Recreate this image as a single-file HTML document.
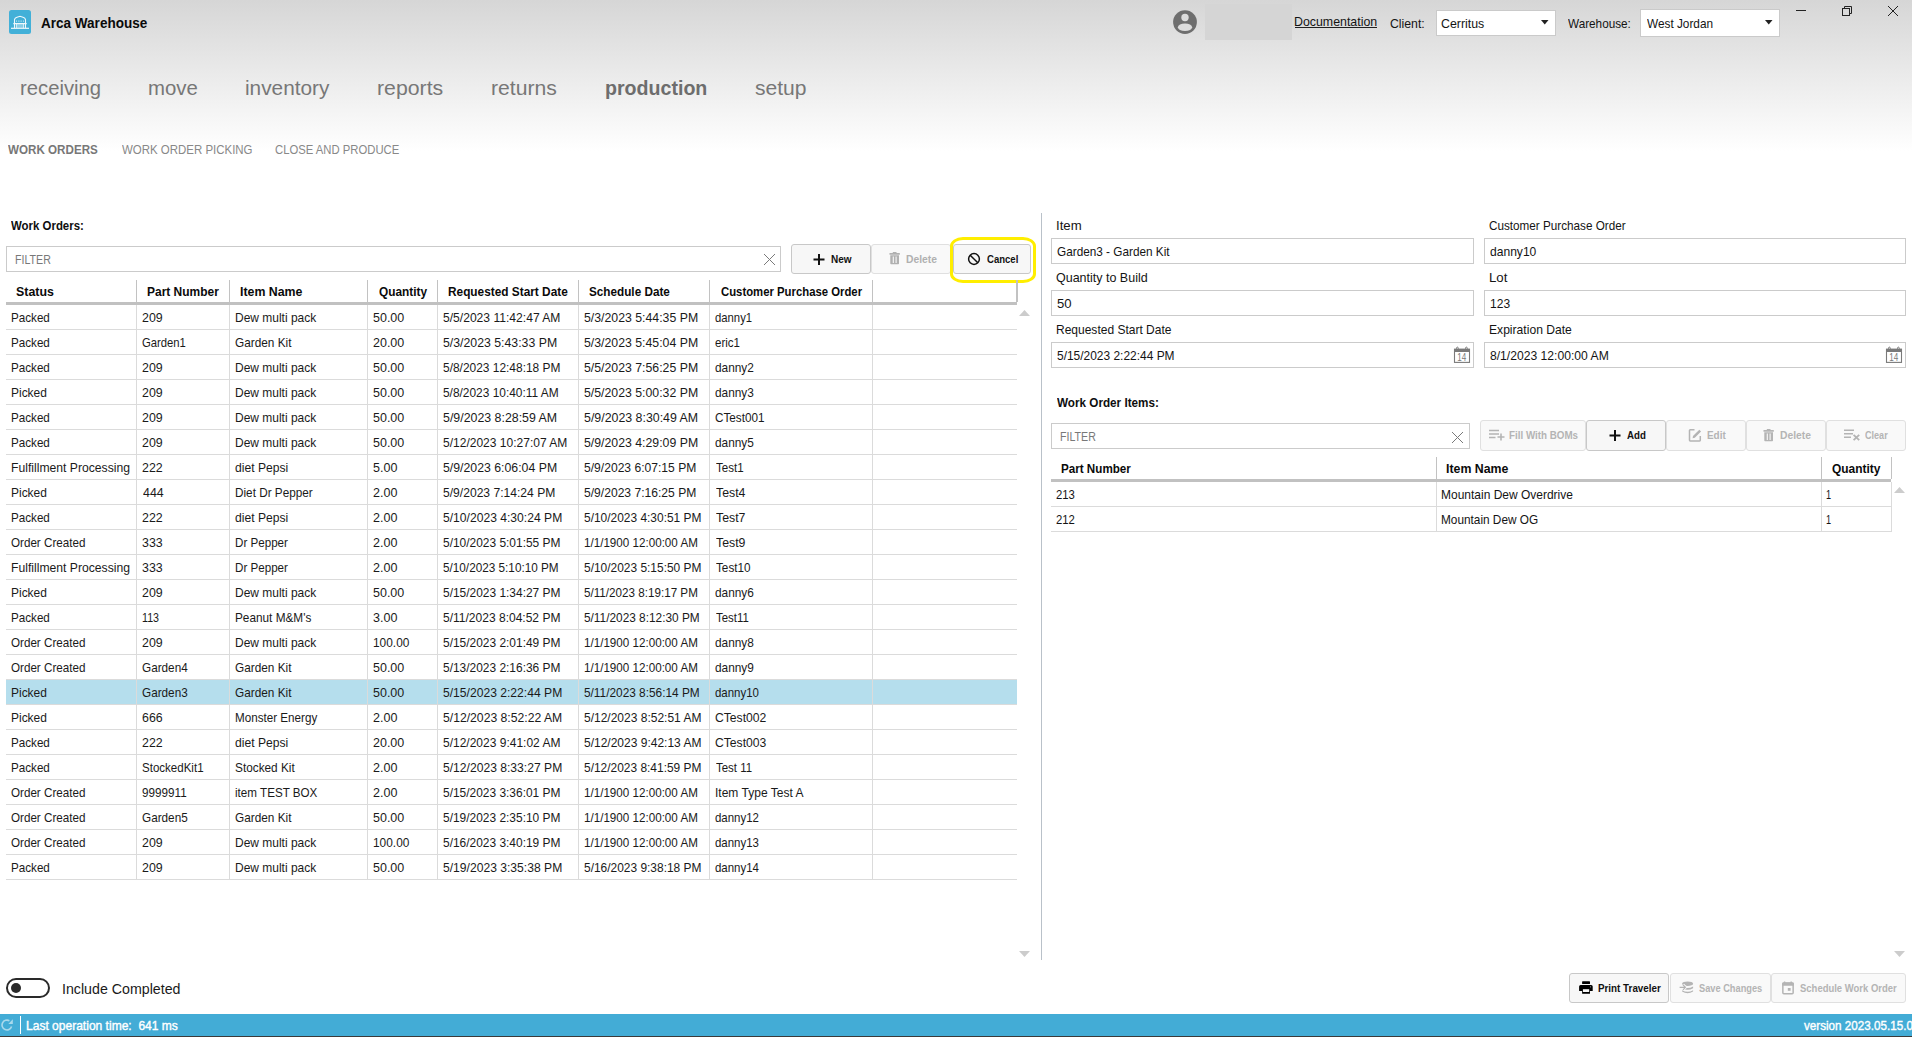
<!DOCTYPE html><html><head><meta charset="utf-8"><style>
html,body{margin:0;padding:0;width:1912px;height:1037px;overflow:hidden;background:#fff;position:relative}
body{font-family:"Liberation Sans",sans-serif}
.a{position:absolute;display:block}
.t{position:absolute;white-space:pre;line-height:1;transform-origin:0 0}
</style></head><body>
<div class="a" style="left:0;top:0;width:1912px;height:151px;background:linear-gradient(#d6d6d6,#ffffff)"></div>
<svg class="a" style="left:9px;top:10px" width="22" height="24" viewBox="0 0 22 24">
<rect x="0" y="0" width="22" height="24" rx="2.5" fill="#42b0d8"/>
<g stroke="#fff" fill="none" opacity="0.92">
<path d="M5.5 18 V9.6 Q5.8 7.9 8 7.2 L11 6.3 L14 7.2 Q16.2 7.9 16.5 9.6 V18" stroke-width="1.1"/>
<path d="M7.6 10.3 V12 M9.9 10.3 V12 M12.1 10.3 V12 M14.4 10.3 V12" stroke-width="0.9" opacity="0.7"/>
<path d="M4.3 13.6 H17.7" stroke-width="1.3"/>
<path d="M7.4 14 V18 M14.6 14 V18" stroke-width="0.9"/>
<path d="M7.8 14.8 H14.2 M7.8 16 H14.2 M7.8 17.2 H14.2" stroke-width="0.7" opacity="0.8"/>
<path d="M2 18.3 H20" stroke-width="1.2"/>
</g></svg>
<div class="t" style="left:41.40px;top:15.30px;font-size:15px;font-weight:bold;color:#0a0a0a;transform:scaleX(0.9017);">Arca Warehouse</div>
<svg class="a" style="left:1173px;top:10px" width="24" height="24" viewBox="0 0 24 24">
<circle cx="12" cy="12.1" r="11.9" fill="#6e6e6e"/>
<circle cx="12" cy="7.5" r="3.7" fill="#dcdcdc"/>
<ellipse cx="12" cy="17.2" rx="7.1" ry="3.8" fill="#dcdcdc"/>
</svg>
<div class="a" style="left:1205px;top:4px;width:87px;height:36px;background:#d5d5d5"></div>
<div class="t" style="left:1294.35px;top:15.00px;font-size:13px;color:#141414;transform:scaleX(0.9512);">Documentation</div>
<div class="a" style="left:1295px;top:27px;width:82px;height:1px;background:#202020"></div>
<div class="t" style="left:1389.76px;top:17.00px;font-size:13px;color:#141414;transform:scaleX(0.9429);">Client:</div>
<div class="a" style="left:1436px;top:10px;width:120px;height:26px;background:#fff;border:1px solid #cacaca;box-sizing:border-box"></div>
<div class="t" style="left:1441.45px;top:17.00px;font-size:13px;color:#141414;transform:scaleX(0.9500);">Cerritus</div>
<svg class="a" style="left:1541px;top:20px" width="8" height="5"><path d="M0 0 H7.5 L3.75 4.5Z" fill="#222"/></svg>
<div class="t" style="left:1567.70px;top:17.00px;font-size:13px;color:#141414;transform:scaleX(0.9029);">Warehouse:</div>
<div class="a" style="left:1640px;top:9px;width:140px;height:28px;background:#fff;border:1px solid #cacaca;box-sizing:border-box"></div>
<div class="t" style="left:1646.50px;top:17.00px;font-size:13px;color:#141414;transform:scaleX(0.9083);">West Jordan</div>
<svg class="a" style="left:1765px;top:20px" width="8" height="5"><path d="M0 0 H7.5 L3.75 4.5Z" fill="#222"/></svg>
<div class="a" style="left:1796px;top:10px;width:10px;height:1px;background:#222"></div>
<svg class="a" style="left:1840px;top:4px" width="14" height="14" viewBox="0 0 14 14" fill="none" stroke="#222" stroke-width="1">
<rect x="2.5" y="4.5" width="7" height="7"/><path d="M4.5 4.5 V2.5 H11.5 V9.5 H9.5"/></svg>
<svg class="a" style="left:1886px;top:4px" width="14" height="14" viewBox="0 0 14 14" fill="none" stroke="#222" stroke-width="1">
<path d="M2 2 L12 12 M12 2 L2 12"/></svg>
<div class="t" style="left:19.71px;top:78.15px;font-size:20.5px;color:#777777;transform:scaleX(0.9887);">receiving</div>
<div class="t" style="left:147.71px;top:78.15px;font-size:20.5px;color:#777777;transform:scaleX(0.9938);">move</div>
<div class="t" style="left:244.69px;top:78.15px;font-size:20.5px;color:#777777;transform:scaleX(1.0146);">inventory</div>
<div class="t" style="left:377.26px;top:78.15px;font-size:20.5px;color:#777777;transform:scaleX(1.0371);">reports</div>
<div class="t" style="left:491.37px;top:78.15px;font-size:20.5px;color:#777777;transform:scaleX(1.0323);">returns</div>
<div class="t" style="left:605.14px;top:78.15px;font-size:20.5px;font-weight:bold;color:#6d6d6d;transform:scaleX(0.9562);">production</div>
<div class="t" style="left:754.57px;top:78.15px;font-size:20.5px;color:#777777;transform:scaleX(1.0271);">setup</div>
<div class="t" style="left:8.30px;top:143.00px;font-size:13px;font-weight:bold;color:#777;transform:scaleX(0.8950);">WORK ORDERS</div>
<div class="t" style="left:121.90px;top:143.00px;font-size:13px;color:#888;transform:scaleX(0.8816);">WORK ORDER PICKING</div>
<div class="t" style="left:275.13px;top:143.00px;font-size:13px;color:#888;transform:scaleX(0.8690);">CLOSE AND PRODUCE</div>
<div class="t" style="left:11.40px;top:219.00px;font-size:13px;font-weight:bold;color:#0e0e0e;transform:scaleX(0.8793);">Work Orders:</div>
<div class="a" style="left:6px;top:246px;width:775px;height:26px;background:#fff;border:1px solid #cbcbcb;box-sizing:border-box"></div>
<div class="t" style="left:15.35px;top:254.42px;font-size:12.5px;color:#787878;transform:scaleX(0.8500);">FILTER</div>
<svg class="a" style="left:763px;top:253px" width="13" height="13" viewBox="0 0 13 13" fill="none" stroke="#7a7a7a" stroke-width="1"><path d="M1 1 L12 12 M12 1 L1 12"/></svg>
<div class="a" style="left:791px;top:244px;width:80px;height:30px;background:#f7f7f7;border:1px solid #c8c8c8;border-radius:3px;box-sizing:border-box"></div>
<svg class="a" style="left:812px;top:253px" width="14" height="13" viewBox="0 0 14 13"><path d="M7 1 V12 M1.5 6.5 H12.5" stroke="#111" stroke-width="2"/></svg>
<div class="t" style="left:830.99px;top:253.69px;font-size:11px;font-weight:bold;color:#111;transform:scaleX(0.9091);">New</div>
<div class="a" style="left:871px;top:244px;width:80px;height:30px;background:#f9f9f9;border:1px solid #e0e0e0;border-radius:3px;box-sizing:border-box"></div>
<svg class="a" style="left:889px;top:252px" width="12" height="13" viewBox="0 0 12 13"><path d="M0.5 1 H10.8 V2.8 H0.5Z M3.8 0 H7.5 V1 H3.8Z" fill="#b0b0b0"/><path d="M1.3 3.3 H10 V11.5 Q10 12.3 9.2 12.3 H2.1 Q1.3 12.3 1.3 11.5Z" fill="#b0b0b0"/><path d="M4.3 4.6 V11 M7.1 4.6 V11" stroke="#f9f9f9" stroke-width="1.1"/></svg>
<div class="t" style="left:906.06px;top:253.69px;font-size:11px;font-weight:bold;color:#b0b0b0;transform:scaleX(0.9375);">Delete</div>
<div class="a" style="left:953px;top:244px;width:78px;height:30px;background:#f7f7f7;border:1px solid #c8c8c8;border-radius:3px;box-sizing:border-box"></div>
<svg class="a" style="left:967px;top:252px" width="14" height="14" viewBox="0 0 14 14" fill="none" stroke="#111" stroke-width="1.5"><circle cx="7" cy="7" r="5.4"/><path d="M3.2 3.2 L10.8 10.8"/></svg>
<div class="t" style="left:986.80px;top:253.69px;font-size:11px;font-weight:bold;color:#111;transform:scaleX(0.8686);">Cancel</div>
<div class="a" style="left:950px;top:237px;width:86px;height:46px;border:3px solid #ffee00;border-radius:13px/9px;box-sizing:border-box"></div>
<div class="a" style="left:136px;top:280px;width:1px;height:22px;background:#c2c2c2"></div>
<div class="a" style="left:229px;top:280px;width:1px;height:22px;background:#c2c2c2"></div>
<div class="a" style="left:367px;top:280px;width:1px;height:22px;background:#c2c2c2"></div>
<div class="a" style="left:437px;top:280px;width:1px;height:22px;background:#c2c2c2"></div>
<div class="a" style="left:578px;top:280px;width:1px;height:22px;background:#c2c2c2"></div>
<div class="a" style="left:709px;top:280px;width:1px;height:22px;background:#c2c2c2"></div>
<div class="a" style="left:872px;top:280px;width:1px;height:22px;background:#c2c2c2"></div>
<div class="a" style="left:1017px;top:280px;width:1px;height:22px;background:#c2c2c2"></div>
<div class="a" style="left:6px;top:302px;width:1011px;height:3px;background:#c1c1c1"></div>
<div class="t" style="left:15.55px;top:285.00px;font-size:13px;font-weight:bold;color:#0a0a0a;transform:scaleX(0.9526);">Status</div>
<div class="t" style="left:146.88px;top:285.00px;font-size:13px;font-weight:bold;color:#0a0a0a;transform:scaleX(0.9208);">Part Number</div>
<div class="t" style="left:239.85px;top:285.00px;font-size:13px;font-weight:bold;color:#0a0a0a;transform:scaleX(0.9500);">Item Name</div>
<div class="t" style="left:378.80px;top:285.00px;font-size:13px;font-weight:bold;color:#0a0a0a;transform:scaleX(0.9113);">Quantity</div>
<div class="t" style="left:447.89px;top:285.00px;font-size:13px;font-weight:bold;color:#0a0a0a;transform:scaleX(0.9108);">Requested Start Date</div>
<div class="t" style="left:588.90px;top:285.00px;font-size:13px;font-weight:bold;color:#0a0a0a;transform:scaleX(0.9023);">Schedule Date</div>
<div class="t" style="left:720.80px;top:285.00px;font-size:13px;font-weight:bold;color:#0a0a0a;transform:scaleX(0.8716);">Customer Purchase Order</div>
<div class="a" style="left:6px;top:680px;width:1011px;height:25px;background:#b5deed"></div>
<div class="a" style="left:6px;top:329px;width:1011px;height:1px;background:#dbdbdb"></div>
<div class="a" style="left:6px;top:354px;width:1011px;height:1px;background:#dbdbdb"></div>
<div class="a" style="left:6px;top:379px;width:1011px;height:1px;background:#dbdbdb"></div>
<div class="a" style="left:6px;top:404px;width:1011px;height:1px;background:#dbdbdb"></div>
<div class="a" style="left:6px;top:429px;width:1011px;height:1px;background:#dbdbdb"></div>
<div class="a" style="left:6px;top:454px;width:1011px;height:1px;background:#dbdbdb"></div>
<div class="a" style="left:6px;top:479px;width:1011px;height:1px;background:#dbdbdb"></div>
<div class="a" style="left:6px;top:504px;width:1011px;height:1px;background:#dbdbdb"></div>
<div class="a" style="left:6px;top:529px;width:1011px;height:1px;background:#dbdbdb"></div>
<div class="a" style="left:6px;top:554px;width:1011px;height:1px;background:#dbdbdb"></div>
<div class="a" style="left:6px;top:579px;width:1011px;height:1px;background:#dbdbdb"></div>
<div class="a" style="left:6px;top:604px;width:1011px;height:1px;background:#dbdbdb"></div>
<div class="a" style="left:6px;top:629px;width:1011px;height:1px;background:#dbdbdb"></div>
<div class="a" style="left:6px;top:654px;width:1011px;height:1px;background:#dbdbdb"></div>
<div class="a" style="left:6px;top:679px;width:1011px;height:1px;background:#dbdbdb"></div>
<div class="a" style="left:6px;top:704px;width:1011px;height:1px;background:#dbdbdb"></div>
<div class="a" style="left:6px;top:729px;width:1011px;height:1px;background:#dbdbdb"></div>
<div class="a" style="left:6px;top:754px;width:1011px;height:1px;background:#dbdbdb"></div>
<div class="a" style="left:6px;top:779px;width:1011px;height:1px;background:#dbdbdb"></div>
<div class="a" style="left:6px;top:804px;width:1011px;height:1px;background:#dbdbdb"></div>
<div class="a" style="left:6px;top:829px;width:1011px;height:1px;background:#dbdbdb"></div>
<div class="a" style="left:6px;top:854px;width:1011px;height:1px;background:#dbdbdb"></div>
<div class="a" style="left:6px;top:879px;width:1011px;height:1px;background:#dbdbdb"></div>
<div class="a" style="left:136px;top:305px;width:1px;height:575px;background:#dbdbdb"></div>
<div class="a" style="left:229px;top:305px;width:1px;height:575px;background:#dbdbdb"></div>
<div class="a" style="left:367px;top:305px;width:1px;height:575px;background:#dbdbdb"></div>
<div class="a" style="left:437px;top:305px;width:1px;height:575px;background:#dbdbdb"></div>
<div class="a" style="left:578px;top:305px;width:1px;height:575px;background:#dbdbdb"></div>
<div class="a" style="left:709px;top:305px;width:1px;height:575px;background:#dbdbdb"></div>
<div class="a" style="left:872px;top:305px;width:1px;height:575px;background:#dbdbdb"></div>
<div class="a" style="left:1016px;top:280px;width:1px;height:25px;background:#c2c2c2"></div>
<div class="t" style="left:10.90px;top:311.00px;font-size:13px;color:#1a1a1a;transform:scaleX(0.8960);">Packed</div>
<div class="t" style="left:141.65px;top:311.00px;font-size:13px;color:#1a1a1a;transform:scaleX(0.9530);">209</div>
<div class="t" style="left:234.68px;top:311.00px;font-size:13px;color:#1a1a1a;transform:scaleX(0.9215);">Dew multi pack</div>
<div class="t" style="left:372.64px;top:311.00px;font-size:13px;color:#1a1a1a;transform:scaleX(0.9611);">50.00</div>
<div class="t" style="left:442.67px;top:311.00px;font-size:13px;color:#1a1a1a;transform:scaleX(0.9302);">5/5/2023 11:42:47 AM</div>
<div class="t" style="left:583.65px;top:311.00px;font-size:13px;color:#1a1a1a;transform:scaleX(0.9455);">5/3/2023 5:44:35 PM</div>
<div class="t" style="left:714.73px;top:311.00px;font-size:13px;color:#1a1a1a;transform:scaleX(0.8694);">danny1</div>
<div class="t" style="left:10.90px;top:336.00px;font-size:13px;color:#1a1a1a;transform:scaleX(0.8960);">Packed</div>
<div class="t" style="left:141.73px;top:336.00px;font-size:13px;color:#1a1a1a;transform:scaleX(0.8677);">Garden1</div>
<div class="t" style="left:234.69px;top:336.00px;font-size:13px;color:#1a1a1a;transform:scaleX(0.9082);">Garden Kit</div>
<div class="t" style="left:372.64px;top:336.00px;font-size:13px;color:#1a1a1a;transform:scaleX(0.9611);">20.00</div>
<div class="t" style="left:442.65px;top:336.00px;font-size:13px;color:#1a1a1a;transform:scaleX(0.9455);">5/3/2023 5:43:33 PM</div>
<div class="t" style="left:583.65px;top:336.00px;font-size:13px;color:#1a1a1a;transform:scaleX(0.9455);">5/3/2023 5:45:04 PM</div>
<div class="t" style="left:714.71px;top:336.00px;font-size:13px;color:#1a1a1a;transform:scaleX(0.8858);">eric1</div>
<div class="t" style="left:10.90px;top:361.00px;font-size:13px;color:#1a1a1a;transform:scaleX(0.8960);">Packed</div>
<div class="t" style="left:141.65px;top:361.00px;font-size:13px;color:#1a1a1a;transform:scaleX(0.9530);">209</div>
<div class="t" style="left:234.68px;top:361.00px;font-size:13px;color:#1a1a1a;transform:scaleX(0.9215);">Dew multi pack</div>
<div class="t" style="left:372.64px;top:361.00px;font-size:13px;color:#1a1a1a;transform:scaleX(0.9611);">50.00</div>
<div class="t" style="left:442.68px;top:361.00px;font-size:13px;color:#1a1a1a;transform:scaleX(0.9179);">5/8/2023 12:48:18 PM</div>
<div class="t" style="left:583.65px;top:361.00px;font-size:13px;color:#1a1a1a;transform:scaleX(0.9455);">5/5/2023 7:56:25 PM</div>
<div class="t" style="left:714.69px;top:361.00px;font-size:13px;color:#1a1a1a;transform:scaleX(0.9115);">danny2</div>
<div class="t" style="left:10.88px;top:386.00px;font-size:13px;color:#1a1a1a;transform:scaleX(0.9195);">Picked</div>
<div class="t" style="left:141.65px;top:386.00px;font-size:13px;color:#1a1a1a;transform:scaleX(0.9530);">209</div>
<div class="t" style="left:234.68px;top:386.00px;font-size:13px;color:#1a1a1a;transform:scaleX(0.9215);">Dew multi pack</div>
<div class="t" style="left:372.64px;top:386.00px;font-size:13px;color:#1a1a1a;transform:scaleX(0.9611);">50.00</div>
<div class="t" style="left:442.68px;top:386.00px;font-size:13px;color:#1a1a1a;transform:scaleX(0.9160);">5/8/2023 10:40:11 AM</div>
<div class="t" style="left:583.65px;top:386.00px;font-size:13px;color:#1a1a1a;transform:scaleX(0.9455);">5/5/2023 5:00:32 PM</div>
<div class="t" style="left:714.69px;top:386.00px;font-size:13px;color:#1a1a1a;transform:scaleX(0.9115);">danny3</div>
<div class="t" style="left:10.90px;top:411.00px;font-size:13px;color:#1a1a1a;transform:scaleX(0.8960);">Packed</div>
<div class="t" style="left:141.65px;top:411.00px;font-size:13px;color:#1a1a1a;transform:scaleX(0.9530);">209</div>
<div class="t" style="left:234.68px;top:411.00px;font-size:13px;color:#1a1a1a;transform:scaleX(0.9215);">Dew multi pack</div>
<div class="t" style="left:372.64px;top:411.00px;font-size:13px;color:#1a1a1a;transform:scaleX(0.9611);">50.00</div>
<div class="t" style="left:442.65px;top:411.00px;font-size:13px;color:#1a1a1a;transform:scaleX(0.9512);">5/9/2023 8:28:59 AM</div>
<div class="t" style="left:583.65px;top:411.00px;font-size:13px;color:#1a1a1a;transform:scaleX(0.9512);">5/9/2023 8:30:49 AM</div>
<div class="t" style="left:714.70px;top:411.00px;font-size:13px;color:#1a1a1a;transform:scaleX(0.9028);">CTest001</div>
<div class="t" style="left:10.90px;top:436.00px;font-size:13px;color:#1a1a1a;transform:scaleX(0.8960);">Packed</div>
<div class="t" style="left:141.65px;top:436.00px;font-size:13px;color:#1a1a1a;transform:scaleX(0.9530);">209</div>
<div class="t" style="left:234.68px;top:436.00px;font-size:13px;color:#1a1a1a;transform:scaleX(0.9215);">Dew multi pack</div>
<div class="t" style="left:372.64px;top:436.00px;font-size:13px;color:#1a1a1a;transform:scaleX(0.9611);">50.00</div>
<div class="t" style="left:442.68px;top:436.00px;font-size:13px;color:#1a1a1a;transform:scaleX(0.9247);">5/12/2023 10:27:07 AM</div>
<div class="t" style="left:583.65px;top:436.00px;font-size:13px;color:#1a1a1a;transform:scaleX(0.9455);">5/9/2023 4:29:09 PM</div>
<div class="t" style="left:714.69px;top:436.00px;font-size:13px;color:#1a1a1a;transform:scaleX(0.9115);">danny5</div>
<div class="t" style="left:10.86px;top:461.00px;font-size:13px;color:#1a1a1a;transform:scaleX(0.9359);">Fulfillment Processing</div>
<div class="t" style="left:141.65px;top:461.00px;font-size:13px;color:#1a1a1a;transform:scaleX(0.9530);">222</div>
<div class="t" style="left:234.67px;top:461.00px;font-size:13px;color:#1a1a1a;transform:scaleX(0.9314);">diet Pepsi</div>
<div class="t" style="left:372.64px;top:461.00px;font-size:13px;color:#1a1a1a;transform:scaleX(0.9634);">5.00</div>
<div class="t" style="left:442.65px;top:461.00px;font-size:13px;color:#1a1a1a;transform:scaleX(0.9455);">5/9/2023 6:06:04 PM</div>
<div class="t" style="left:583.67px;top:461.00px;font-size:13px;color:#1a1a1a;transform:scaleX(0.9307);">5/9/2023 6:07:15 PM</div>
<div class="t" style="left:715.60px;top:461.00px;font-size:13px;color:#1a1a1a;transform:scaleX(0.8899);">Test1</div>
<div class="t" style="left:10.88px;top:486.00px;font-size:13px;color:#1a1a1a;transform:scaleX(0.9195);">Picked</div>
<div class="t" style="left:142.60px;top:486.00px;font-size:13px;color:#1a1a1a;transform:scaleX(0.9530);">444</div>
<div class="t" style="left:234.70px;top:486.00px;font-size:13px;color:#1a1a1a;transform:scaleX(0.9036);">Diet Dr Pepper</div>
<div class="t" style="left:372.64px;top:486.00px;font-size:13px;color:#1a1a1a;transform:scaleX(0.9634);">2.00</div>
<div class="t" style="left:442.67px;top:486.00px;font-size:13px;color:#1a1a1a;transform:scaleX(0.9307);">5/9/2023 7:14:24 PM</div>
<div class="t" style="left:583.67px;top:486.00px;font-size:13px;color:#1a1a1a;transform:scaleX(0.9307);">5/9/2023 7:16:25 PM</div>
<div class="t" style="left:715.60px;top:486.00px;font-size:13px;color:#1a1a1a;transform:scaleX(0.9476);">Test4</div>
<div class="t" style="left:10.90px;top:511.00px;font-size:13px;color:#1a1a1a;transform:scaleX(0.8960);">Packed</div>
<div class="t" style="left:141.65px;top:511.00px;font-size:13px;color:#1a1a1a;transform:scaleX(0.9530);">222</div>
<div class="t" style="left:234.67px;top:511.00px;font-size:13px;color:#1a1a1a;transform:scaleX(0.9314);">diet Pepsi</div>
<div class="t" style="left:372.64px;top:511.00px;font-size:13px;color:#1a1a1a;transform:scaleX(0.9634);">2.00</div>
<div class="t" style="left:442.67px;top:511.00px;font-size:13px;color:#1a1a1a;transform:scaleX(0.9320);">5/10/2023 4:30:24 PM</div>
<div class="t" style="left:583.68px;top:511.00px;font-size:13px;color:#1a1a1a;transform:scaleX(0.9179);">5/10/2023 4:30:51 PM</div>
<div class="t" style="left:715.60px;top:511.00px;font-size:13px;color:#1a1a1a;transform:scaleX(0.9476);">Test7</div>
<div class="t" style="left:10.90px;top:536.00px;font-size:13px;color:#1a1a1a;transform:scaleX(0.8952);">Order Created</div>
<div class="t" style="left:141.65px;top:536.00px;font-size:13px;color:#1a1a1a;transform:scaleX(0.9530);">333</div>
<div class="t" style="left:234.71px;top:536.00px;font-size:13px;color:#1a1a1a;transform:scaleX(0.8929);">Dr Pepper</div>
<div class="t" style="left:372.64px;top:536.00px;font-size:13px;color:#1a1a1a;transform:scaleX(0.9634);">2.00</div>
<div class="t" style="left:442.68px;top:536.00px;font-size:13px;color:#1a1a1a;transform:scaleX(0.9179);">5/10/2023 5:01:55 PM</div>
<div class="t" style="left:583.71px;top:536.00px;font-size:13px;color:#1a1a1a;transform:scaleX(0.8949);">1/1/1900 12:00:00 AM</div>
<div class="t" style="left:715.60px;top:536.00px;font-size:13px;color:#1a1a1a;transform:scaleX(0.9476);">Test9</div>
<div class="t" style="left:10.86px;top:561.00px;font-size:13px;color:#1a1a1a;transform:scaleX(0.9359);">Fulfillment Processing</div>
<div class="t" style="left:141.65px;top:561.00px;font-size:13px;color:#1a1a1a;transform:scaleX(0.9530);">333</div>
<div class="t" style="left:234.71px;top:561.00px;font-size:13px;color:#1a1a1a;transform:scaleX(0.8929);">Dr Pepper</div>
<div class="t" style="left:372.64px;top:561.00px;font-size:13px;color:#1a1a1a;transform:scaleX(0.9634);">2.00</div>
<div class="t" style="left:442.70px;top:561.00px;font-size:13px;color:#1a1a1a;transform:scaleX(0.9039);">5/10/2023 5:10:10 PM</div>
<div class="t" style="left:583.68px;top:561.00px;font-size:13px;color:#1a1a1a;transform:scaleX(0.9179);">5/10/2023 5:15:50 PM</div>
<div class="t" style="left:715.60px;top:561.00px;font-size:13px;color:#1a1a1a;transform:scaleX(0.9018);">Test10</div>
<div class="t" style="left:10.88px;top:586.00px;font-size:13px;color:#1a1a1a;transform:scaleX(0.9195);">Picked</div>
<div class="t" style="left:141.65px;top:586.00px;font-size:13px;color:#1a1a1a;transform:scaleX(0.9530);">209</div>
<div class="t" style="left:234.68px;top:586.00px;font-size:13px;color:#1a1a1a;transform:scaleX(0.9215);">Dew multi pack</div>
<div class="t" style="left:372.64px;top:586.00px;font-size:13px;color:#1a1a1a;transform:scaleX(0.9611);">50.00</div>
<div class="t" style="left:442.68px;top:586.00px;font-size:13px;color:#1a1a1a;transform:scaleX(0.9179);">5/15/2023 1:34:27 PM</div>
<div class="t" style="left:583.70px;top:586.00px;font-size:13px;color:#1a1a1a;transform:scaleX(0.8967);">5/11/2023 8:19:17 PM</div>
<div class="t" style="left:714.69px;top:586.00px;font-size:13px;color:#1a1a1a;transform:scaleX(0.9115);">danny6</div>
<div class="t" style="left:10.90px;top:611.00px;font-size:13px;color:#1a1a1a;transform:scaleX(0.8960);">Packed</div>
<div class="t" style="left:141.78px;top:611.00px;font-size:13px;color:#1a1a1a;transform:scaleX(0.8243);">113</div>
<div class="t" style="left:234.69px;top:611.00px;font-size:13px;color:#1a1a1a;transform:scaleX(0.9071);">Peanut M&amp;M&#x27;s</div>
<div class="t" style="left:372.64px;top:611.00px;font-size:13px;color:#1a1a1a;transform:scaleX(0.9634);">3.00</div>
<div class="t" style="left:442.68px;top:611.00px;font-size:13px;color:#1a1a1a;transform:scaleX(0.9249);">5/11/2023 8:04:52 PM</div>
<div class="t" style="left:583.69px;top:611.00px;font-size:13px;color:#1a1a1a;transform:scaleX(0.9108);">5/11/2023 8:12:30 PM</div>
<div class="t" style="left:715.60px;top:611.00px;font-size:13px;color:#1a1a1a;transform:scaleX(0.8771);">Test11</div>
<div class="t" style="left:10.90px;top:636.00px;font-size:13px;color:#1a1a1a;transform:scaleX(0.8952);">Order Created</div>
<div class="t" style="left:141.65px;top:636.00px;font-size:13px;color:#1a1a1a;transform:scaleX(0.9530);">209</div>
<div class="t" style="left:234.68px;top:636.00px;font-size:13px;color:#1a1a1a;transform:scaleX(0.9215);">Dew multi pack</div>
<div class="t" style="left:372.69px;top:636.00px;font-size:13px;color:#1a1a1a;transform:scaleX(0.9145);">100.00</div>
<div class="t" style="left:442.68px;top:636.00px;font-size:13px;color:#1a1a1a;transform:scaleX(0.9179);">5/15/2023 2:01:49 PM</div>
<div class="t" style="left:583.71px;top:636.00px;font-size:13px;color:#1a1a1a;transform:scaleX(0.8949);">1/1/1900 12:00:00 AM</div>
<div class="t" style="left:714.69px;top:636.00px;font-size:13px;color:#1a1a1a;transform:scaleX(0.9115);">danny8</div>
<div class="t" style="left:10.90px;top:661.00px;font-size:13px;color:#1a1a1a;transform:scaleX(0.8952);">Order Created</div>
<div class="t" style="left:141.70px;top:661.00px;font-size:13px;color:#1a1a1a;transform:scaleX(0.9032);">Garden4</div>
<div class="t" style="left:234.69px;top:661.00px;font-size:13px;color:#1a1a1a;transform:scaleX(0.9082);">Garden Kit</div>
<div class="t" style="left:372.64px;top:661.00px;font-size:13px;color:#1a1a1a;transform:scaleX(0.9611);">50.00</div>
<div class="t" style="left:442.68px;top:661.00px;font-size:13px;color:#1a1a1a;transform:scaleX(0.9179);">5/13/2023 2:16:36 PM</div>
<div class="t" style="left:583.71px;top:661.00px;font-size:13px;color:#1a1a1a;transform:scaleX(0.8949);">1/1/1900 12:00:00 AM</div>
<div class="t" style="left:714.69px;top:661.00px;font-size:13px;color:#1a1a1a;transform:scaleX(0.9115);">danny9</div>
<div class="t" style="left:10.88px;top:686.00px;font-size:13px;color:#1a1a1a;transform:scaleX(0.9195);">Picked</div>
<div class="t" style="left:141.70px;top:686.00px;font-size:13px;color:#1a1a1a;transform:scaleX(0.9032);">Garden3</div>
<div class="t" style="left:234.69px;top:686.00px;font-size:13px;color:#1a1a1a;transform:scaleX(0.9082);">Garden Kit</div>
<div class="t" style="left:372.64px;top:686.00px;font-size:13px;color:#1a1a1a;transform:scaleX(0.9611);">50.00</div>
<div class="t" style="left:442.67px;top:686.00px;font-size:13px;color:#1a1a1a;transform:scaleX(0.9320);">5/15/2023 2:22:44 PM</div>
<div class="t" style="left:583.69px;top:686.00px;font-size:13px;color:#1a1a1a;transform:scaleX(0.9108);">5/11/2023 8:56:14 PM</div>
<div class="t" style="left:714.72px;top:686.00px;font-size:13px;color:#1a1a1a;transform:scaleX(0.8815);">danny10</div>
<div class="t" style="left:10.88px;top:711.00px;font-size:13px;color:#1a1a1a;transform:scaleX(0.9195);">Picked</div>
<div class="t" style="left:141.65px;top:711.00px;font-size:13px;color:#1a1a1a;transform:scaleX(0.9530);">666</div>
<div class="t" style="left:234.70px;top:711.00px;font-size:13px;color:#1a1a1a;transform:scaleX(0.8959);">Monster Energy</div>
<div class="t" style="left:372.64px;top:711.00px;font-size:13px;color:#1a1a1a;transform:scaleX(0.9634);">2.00</div>
<div class="t" style="left:442.66px;top:711.00px;font-size:13px;color:#1a1a1a;transform:scaleX(0.9372);">5/12/2023 8:52:22 AM</div>
<div class="t" style="left:583.68px;top:711.00px;font-size:13px;color:#1a1a1a;transform:scaleX(0.9231);">5/12/2023 8:52:51 AM</div>
<div class="t" style="left:714.66px;top:711.00px;font-size:13px;color:#1a1a1a;transform:scaleX(0.9354);">CTest002</div>
<div class="t" style="left:10.90px;top:736.00px;font-size:13px;color:#1a1a1a;transform:scaleX(0.8960);">Packed</div>
<div class="t" style="left:141.65px;top:736.00px;font-size:13px;color:#1a1a1a;transform:scaleX(0.9530);">222</div>
<div class="t" style="left:234.67px;top:736.00px;font-size:13px;color:#1a1a1a;transform:scaleX(0.9314);">diet Pepsi</div>
<div class="t" style="left:372.64px;top:736.00px;font-size:13px;color:#1a1a1a;transform:scaleX(0.9611);">20.00</div>
<div class="t" style="left:442.68px;top:736.00px;font-size:13px;color:#1a1a1a;transform:scaleX(0.9231);">5/12/2023 9:41:02 AM</div>
<div class="t" style="left:583.68px;top:736.00px;font-size:13px;color:#1a1a1a;transform:scaleX(0.9231);">5/12/2023 9:42:13 AM</div>
<div class="t" style="left:714.66px;top:736.00px;font-size:13px;color:#1a1a1a;transform:scaleX(0.9354);">CTest003</div>
<div class="t" style="left:10.90px;top:761.00px;font-size:13px;color:#1a1a1a;transform:scaleX(0.8960);">Packed</div>
<div class="t" style="left:141.71px;top:761.00px;font-size:13px;color:#1a1a1a;transform:scaleX(0.8873);">StockedKit1</div>
<div class="t" style="left:234.69px;top:761.00px;font-size:13px;color:#1a1a1a;transform:scaleX(0.9087);">Stocked Kit</div>
<div class="t" style="left:372.64px;top:761.00px;font-size:13px;color:#1a1a1a;transform:scaleX(0.9634);">2.00</div>
<div class="t" style="left:442.67px;top:761.00px;font-size:13px;color:#1a1a1a;transform:scaleX(0.9320);">5/12/2023 8:33:27 PM</div>
<div class="t" style="left:583.68px;top:761.00px;font-size:13px;color:#1a1a1a;transform:scaleX(0.9179);">5/12/2023 8:41:59 PM</div>
<div class="t" style="left:715.60px;top:761.00px;font-size:13px;color:#1a1a1a;transform:scaleX(0.8801);">Test 11</div>
<div class="t" style="left:10.90px;top:786.00px;font-size:13px;color:#1a1a1a;transform:scaleX(0.8952);">Order Created</div>
<div class="t" style="left:141.70px;top:786.00px;font-size:13px;color:#1a1a1a;transform:scaleX(0.8993);">9999911</div>
<div class="t" style="left:234.70px;top:786.00px;font-size:13px;color:#1a1a1a;transform:scaleX(0.8955);">item TEST BOX</div>
<div class="t" style="left:372.64px;top:786.00px;font-size:13px;color:#1a1a1a;transform:scaleX(0.9634);">2.00</div>
<div class="t" style="left:442.68px;top:786.00px;font-size:13px;color:#1a1a1a;transform:scaleX(0.9179);">5/15/2023 3:36:01 PM</div>
<div class="t" style="left:583.71px;top:786.00px;font-size:13px;color:#1a1a1a;transform:scaleX(0.8949);">1/1/1900 12:00:00 AM</div>
<div class="t" style="left:714.67px;top:786.00px;font-size:13px;color:#1a1a1a;transform:scaleX(0.9253);">Item Type Test A</div>
<div class="t" style="left:10.90px;top:811.00px;font-size:13px;color:#1a1a1a;transform:scaleX(0.8952);">Order Created</div>
<div class="t" style="left:141.70px;top:811.00px;font-size:13px;color:#1a1a1a;transform:scaleX(0.9032);">Garden5</div>
<div class="t" style="left:234.69px;top:811.00px;font-size:13px;color:#1a1a1a;transform:scaleX(0.9082);">Garden Kit</div>
<div class="t" style="left:372.64px;top:811.00px;font-size:13px;color:#1a1a1a;transform:scaleX(0.9611);">50.00</div>
<div class="t" style="left:442.68px;top:811.00px;font-size:13px;color:#1a1a1a;transform:scaleX(0.9179);">5/19/2023 2:35:10 PM</div>
<div class="t" style="left:583.71px;top:811.00px;font-size:13px;color:#1a1a1a;transform:scaleX(0.8949);">1/1/1900 12:00:00 AM</div>
<div class="t" style="left:714.72px;top:811.00px;font-size:13px;color:#1a1a1a;transform:scaleX(0.8815);">danny12</div>
<div class="t" style="left:10.90px;top:836.00px;font-size:13px;color:#1a1a1a;transform:scaleX(0.8952);">Order Created</div>
<div class="t" style="left:141.65px;top:836.00px;font-size:13px;color:#1a1a1a;transform:scaleX(0.9530);">209</div>
<div class="t" style="left:234.68px;top:836.00px;font-size:13px;color:#1a1a1a;transform:scaleX(0.9215);">Dew multi pack</div>
<div class="t" style="left:372.69px;top:836.00px;font-size:13px;color:#1a1a1a;transform:scaleX(0.9145);">100.00</div>
<div class="t" style="left:442.68px;top:836.00px;font-size:13px;color:#1a1a1a;transform:scaleX(0.9179);">5/16/2023 3:40:19 PM</div>
<div class="t" style="left:583.71px;top:836.00px;font-size:13px;color:#1a1a1a;transform:scaleX(0.8949);">1/1/1900 12:00:00 AM</div>
<div class="t" style="left:714.72px;top:836.00px;font-size:13px;color:#1a1a1a;transform:scaleX(0.8815);">danny13</div>
<div class="t" style="left:10.90px;top:861.00px;font-size:13px;color:#1a1a1a;transform:scaleX(0.8960);">Packed</div>
<div class="t" style="left:141.65px;top:861.00px;font-size:13px;color:#1a1a1a;transform:scaleX(0.9530);">209</div>
<div class="t" style="left:234.68px;top:861.00px;font-size:13px;color:#1a1a1a;transform:scaleX(0.9215);">Dew multi pack</div>
<div class="t" style="left:372.64px;top:861.00px;font-size:13px;color:#1a1a1a;transform:scaleX(0.9611);">50.00</div>
<div class="t" style="left:442.67px;top:861.00px;font-size:13px;color:#1a1a1a;transform:scaleX(0.9320);">5/19/2023 3:35:38 PM</div>
<div class="t" style="left:583.68px;top:861.00px;font-size:13px;color:#1a1a1a;transform:scaleX(0.9179);">5/16/2023 9:38:18 PM</div>
<div class="t" style="left:714.72px;top:861.00px;font-size:13px;color:#1a1a1a;transform:scaleX(0.8815);">danny14</div>
<svg class="a" style="left:1018px;top:309px" width="13" height="8"><path d="M1 7 H12 L6.5 1Z" fill="#cccccc"/></svg>
<svg class="a" style="left:1018px;top:950px" width="13" height="8"><path d="M1 1 H12 L6.5 7Z" fill="#cccccc"/></svg>
<div class="a" style="left:1041px;top:213px;width:1px;height:747px;background:#b9c1c9"></div>
<div class="a" style="left:6px;top:978px;width:44px;height:20px;border:2px solid #2a2a2a;border-radius:10px;box-sizing:border-box"></div>
<svg class="a" style="left:10px;top:982px" width="12" height="12"><circle cx="6" cy="6" r="5" fill="#2a2a2a"/></svg>
<div class="t" style="left:61.68px;top:980.88px;font-size:15.5px;color:#1a1a1a;transform:scaleX(0.9165);">Include Completed</div>
<div class="t" style="left:1055.69px;top:219.00px;font-size:13px;color:#141414;transform:scaleX(1.0125);">Item</div>
<div class="a" style="left:1051px;top:238px;width:423px;height:26px;background:#fff;border:1px solid #cbcbcb;box-sizing:border-box"></div>
<div class="t" style="left:1057.49px;top:245.00px;font-size:13px;color:#141414;transform:scaleX(0.9057);">Garden3 - Garden Kit</div>
<div class="t" style="left:1488.80px;top:219.00px;font-size:13px;color:#141414;transform:scaleX(0.9000);">Customer Purchase Order</div>
<div class="a" style="left:1484px;top:238px;width:422px;height:26px;background:#fff;border:1px solid #cbcbcb;box-sizing:border-box"></div>
<div class="t" style="left:1490.47px;top:245.00px;font-size:13px;color:#141414;transform:scaleX(0.9286);">danny10</div>
<div class="t" style="left:1055.74px;top:271.00px;font-size:13px;color:#141414;transform:scaleX(0.9606);">Quantity to Build</div>
<div class="a" style="left:1051px;top:290px;width:423px;height:26px;background:#fff;border:1px solid #cbcbcb;box-sizing:border-box"></div>
<div class="t" style="left:1057.39px;top:297.00px;font-size:13px;color:#141414;transform:scaleX(1.0077);">50</div>
<div class="t" style="left:1488.68px;top:271.00px;font-size:13px;color:#141414;transform:scaleX(1.0176);">Lot</div>
<div class="a" style="left:1484px;top:290px;width:422px;height:26px;background:#fff;border:1px solid #cbcbcb;box-sizing:border-box"></div>
<div class="t" style="left:1490.48px;top:297.00px;font-size:13px;color:#141414;transform:scaleX(0.9250);">123</div>
<div class="t" style="left:1055.78px;top:323.00px;font-size:13px;color:#141414;transform:scaleX(0.9234);">Requested Start Date</div>
<div class="a" style="left:1051px;top:342px;width:423px;height:26px;background:#fff;border:1px solid #cbcbcb;box-sizing:border-box"></div>
<div class="t" style="left:1057.48px;top:349.00px;font-size:13px;color:#141414;transform:scaleX(0.9190);">5/15/2023 2:22:44 PM</div>
<svg class="a" style="left:1453px;top:346px" width="18" height="18" viewBox="0 0 18 18" fill="none" stroke="#7a7a7a" stroke-width="1.1"><rect x="1.5" y="3.3" width="15" height="13.1"/><rect x="1" y="2.8" width="16" height="3.2" fill="#7a7a7a" stroke="none"/><path d="M3.5 4 V2.4 Q3.5 1.1 4.4 1.1 Q5.3 1.1 5.3 2.4 V4 M12.5 4 V2.4 Q12.5 1.1 13.4 1.1 Q14.3 1.1 14.3 2.4 V4" stroke-width="1"/><text x="8.8" y="14.8" font-size="10.5" font-family="Liberation Sans" fill="#7a7a7a" stroke="none" text-anchor="middle" textLength="9" lengthAdjust="spacingAndGlyphs">14</text></svg>
<div class="t" style="left:1488.77px;top:323.00px;font-size:13px;color:#141414;transform:scaleX(0.9318);">Expiration Date</div>
<div class="a" style="left:1484px;top:342px;width:422px;height:26px;background:#fff;border:1px solid #cbcbcb;box-sizing:border-box"></div>
<div class="t" style="left:1490.47px;top:349.00px;font-size:13px;color:#141414;transform:scaleX(0.9336);">8/1/2023 12:00:00 AM</div>
<svg class="a" style="left:1885px;top:346px" width="18" height="18" viewBox="0 0 18 18" fill="none" stroke="#7a7a7a" stroke-width="1.1"><rect x="1.5" y="3.3" width="15" height="13.1"/><rect x="1" y="2.8" width="16" height="3.2" fill="#7a7a7a" stroke="none"/><path d="M3.5 4 V2.4 Q3.5 1.1 4.4 1.1 Q5.3 1.1 5.3 2.4 V4 M12.5 4 V2.4 Q12.5 1.1 13.4 1.1 Q14.3 1.1 14.3 2.4 V4" stroke-width="1"/><text x="8.8" y="14.8" font-size="10.5" font-family="Liberation Sans" fill="#7a7a7a" stroke="none" text-anchor="middle" textLength="9" lengthAdjust="spacingAndGlyphs">14</text></svg>
<div class="t" style="left:1056.60px;top:395.50px;font-size:13px;font-weight:bold;color:#0e0e0e;transform:scaleX(0.9000);">Work Order Items:</div>
<div class="a" style="left:1051px;top:423px;width:419px;height:26px;background:#fff;border:1px solid #cbcbcb;box-sizing:border-box"></div>
<div class="t" style="left:1060.45px;top:431.42px;font-size:12.5px;color:#787878;transform:scaleX(0.8500);">FILTER</div>
<svg class="a" style="left:1451px;top:431px" width="13" height="13" viewBox="0 0 13 13" fill="none" stroke="#7a7a7a" stroke-width="1"><path d="M1 1 L12 12 M12 1 L1 12"/></svg>
<div class="a" style="left:1480px;top:420px;width:106px;height:31px;background:#f9f9f9;border:1px solid #e0e0e0;border-radius:3px;box-sizing:border-box"></div>
<div class="a" style="left:1586px;top:420px;width:80px;height:31px;background:#f7f7f7;border:1px solid #c8c8c8;border-radius:3px;box-sizing:border-box"></div>
<div class="a" style="left:1666px;top:420px;width:80px;height:31px;background:#f9f9f9;border:1px solid #e0e0e0;border-radius:3px;box-sizing:border-box"></div>
<div class="a" style="left:1746px;top:420px;width:80px;height:31px;background:#f9f9f9;border:1px solid #e0e0e0;border-radius:3px;box-sizing:border-box"></div>
<div class="a" style="left:1826px;top:420px;width:80px;height:31px;background:#f9f9f9;border:1px solid #e0e0e0;border-radius:3px;box-sizing:border-box"></div>
<svg class="a" style="left:1488px;top:427px" width="18" height="16" viewBox="0 0 18 16" fill="none" stroke="#b4b4b4" stroke-width="1.6"><path d="M1 3.5 H11 M1 7 H11 M1 10.5 H7.5 M13 6.5 V13.5 M9.5 10 H16.5"/></svg>
<div class="t" style="left:1508.91px;top:429.69px;font-size:11px;font-weight:bold;color:#b4b4b4;transform:scaleX(0.8908);">Fill With BOMs</div>
<svg class="a" style="left:1608px;top:429px" width="14" height="13" viewBox="0 0 14 13"><path d="M7 1 V12 M1.5 6.5 H12.5" stroke="#111" stroke-width="2"/></svg>
<div class="t" style="left:1627.20px;top:429.69px;font-size:11px;font-weight:bold;color:#111;transform:scaleX(0.8810);">Add</div>
<svg class="a" style="left:1687px;top:427px" width="16" height="16" viewBox="0 0 16 16" fill="none" stroke="#b4b4b4" stroke-width="1.5"><path d="M7.5 2.8 H3.2 Q2.5 2.8 2.5 3.5 V13.3 Q2.5 14 3.2 14 H12.6 Q13.3 14 13.3 13.3 V9"/><path d="M5.6 11.2 L6 9 L12.3 2.7 L14.1 4.5 L7.8 10.8Z" fill="#b4b4b4" stroke="none"/></svg>
<div class="t" style="left:1706.50px;top:429.69px;font-size:11px;font-weight:bold;color:#b4b4b4;transform:scaleX(0.9000);">Edit</div>
<svg class="a" style="left:1763px;top:429px" width="12" height="13" viewBox="0 0 12 13"><path d="M0.5 1 H10.8 V2.8 H0.5Z M3.8 0 H7.5 V1 H3.8Z" fill="#b4b4b4"/><path d="M1.3 3.3 H10 V11.5 Q10 12.3 9.2 12.3 H2.1 Q1.3 12.3 1.3 11.5Z" fill="#b4b4b4"/><path d="M4.3 4.6 V11 M7.1 4.6 V11" stroke="#f9f9f9" stroke-width="1.1"/></svg>
<div class="t" style="left:1780.46px;top:429.69px;font-size:11px;font-weight:bold;color:#b4b4b4;transform:scaleX(0.9375);">Delete</div>
<svg class="a" style="left:1843px;top:427px" width="19" height="16" viewBox="0 0 19 16" fill="none" stroke="#b4b4b4" stroke-width="1.6"><path d="M1 3.2 H11 M1 6.7 H10 M1 10.3 H8"/><path d="M10.6 7.8 L16.2 13.2 M16.2 7.8 L10.6 13.2" stroke-width="1.8"/></svg>
<div class="t" style="left:1864.60px;top:429.69px;font-size:11px;font-weight:bold;color:#b4b4b4;transform:scaleX(0.8250);">Clear</div>
<div class="a" style="left:1436px;top:457px;width:1px;height:22px;background:#c2c2c2"></div>
<div class="a" style="left:1821px;top:457px;width:1px;height:22px;background:#c2c2c2"></div>
<div class="a" style="left:1891px;top:457px;width:1px;height:22px;background:#c2c2c2"></div>
<div class="a" style="left:1051px;top:479px;width:840px;height:3px;background:#c1c1c1"></div>
<div class="t" style="left:1061.00px;top:462.00px;font-size:13px;font-weight:bold;color:#0a0a0a;transform:scaleX(0.8953);">Part Number</div>
<div class="t" style="left:1446.25px;top:462.00px;font-size:13px;font-weight:bold;color:#0a0a0a;transform:scaleX(0.9484);">Item Name</div>
<div class="t" style="left:1832.20px;top:462.00px;font-size:13px;font-weight:bold;color:#0a0a0a;transform:scaleX(0.9188);">Quantity</div>
<div class="a" style="left:1051px;top:506px;width:840px;height:1px;background:#dbdbdb"></div>
<div class="a" style="left:1051px;top:531px;width:840px;height:1px;background:#dbdbdb"></div>
<div class="a" style="left:1436px;top:482px;width:1px;height:50px;background:#dbdbdb"></div>
<div class="a" style="left:1821px;top:482px;width:1px;height:50px;background:#dbdbdb"></div>
<div class="a" style="left:1891px;top:482px;width:1px;height:50px;background:#dbdbdb"></div>
<div class="t" style="left:1055.73px;top:487.50px;font-size:13px;color:#141414;transform:scaleX(0.8703);">213</div>
<div class="t" style="left:1441.08px;top:487.50px;font-size:13px;color:#141414;transform:scaleX(0.9218);">Mountain Dew Overdrive</div>
<div class="t" style="left:1825.80px;top:487.50px;font-size:13px;color:#141414;transform:scaleX(0.7050);">1</div>
<div class="t" style="left:1055.73px;top:512.50px;font-size:13px;color:#141414;transform:scaleX(0.8703);">212</div>
<div class="t" style="left:1441.09px;top:512.50px;font-size:13px;color:#141414;transform:scaleX(0.9086);">Mountain Dew OG</div>
<div class="t" style="left:1825.80px;top:512.50px;font-size:13px;color:#141414;transform:scaleX(0.7050);">1</div>
<svg class="a" style="left:1893px;top:486px" width="13" height="8"><path d="M1 7 H12 L6.5 1Z" fill="#cccccc"/></svg>
<svg class="a" style="left:1893px;top:950px" width="13" height="8"><path d="M1 1 H12 L6.5 7Z" fill="#cccccc"/></svg>
<div class="a" style="left:1569px;top:973px;width:100px;height:30px;background:#f7f7f7;border:1px solid #c8c8c8;border-radius:3px;box-sizing:border-box"></div>
<div class="a" style="left:1670px;top:973px;width:101px;height:30px;background:#f9f9f9;border:1px solid #e0e0e0;border-radius:3px;box-sizing:border-box"></div>
<div class="a" style="left:1771px;top:973px;width:135px;height:30px;background:#f9f9f9;border:1px solid #e0e0e0;border-radius:3px;box-sizing:border-box"></div>
<svg class="a" style="left:1578px;top:980px" width="16" height="15" viewBox="0 0 16 15"><rect x="4.1" y="1.3" width="7.9" height="2.7" rx="0.6" fill="#000"/><path d="M2.6 5 H13.2 Q14.7 5 14.7 6.5 V10.9 H12 V13.3 Q12 13.8 11.5 13.8 H4.6 Q4.1 13.8 4.1 13.3 V10.9 H1.1 V6.5 Q1.1 5 2.6 5Z" fill="#000"/><rect x="4.9" y="9.2" width="6.3" height="2.8" fill="#f7f7f7"/><circle cx="12.5" cy="6.8" r="0.6" fill="#999"/></svg>
<div class="t" style="left:1597.61px;top:983.19px;font-size:11px;font-weight:bold;color:#111;transform:scaleX(0.8928);">Print Traveler</div>
<svg class="a" style="left:1679px;top:980px" width="16" height="15" viewBox="0 0 16 15"><ellipse cx="8.6" cy="3.7" rx="5.5" ry="2.3" fill="#b4b4b4"/><path d="M3.1 6.4 Q8.6 9.4 14.1 6.4 V8.3 Q8.6 11.3 3.1 8.3Z M3.1 10.3 Q8.6 13.3 14.1 10.3 V11.6 Q8.6 14.8 3.1 11.6Z" fill="#b4b4b4"/><path d="M0.6 7.3 H6.2 M4 4.8 L6.4 7.3 L4 9.8" stroke="#f9f9f9" stroke-width="3" fill="none"/><path d="M0.6 7.3 H6.2 M4 4.8 L6.4 7.3 L4 9.8" stroke="#b4b4b4" stroke-width="1.2" fill="none"/></svg>
<div class="t" style="left:1698.70px;top:983.19px;font-size:11px;font-weight:bold;color:#b4b4b4;transform:scaleX(0.8413);">Save Changes</div>
<svg class="a" style="left:1781px;top:980px" width="14" height="15" viewBox="0 0 14 15"><path d="M3.6 1.4 V3.6 M10.2 1.4 V3.6" stroke="#b4b4b4" stroke-width="1.4"/><rect x="1.85" y="3" width="10.3" height="10.8" rx="1" fill="none" stroke="#b4b4b4" stroke-width="1.5"/><rect x="1.2" y="2.5" width="11.6" height="3.2" rx="0.8" fill="#b4b4b4"/><rect x="6.8" y="8" width="2.8" height="2.8" fill="#b4b4b4"/></svg>
<div class="t" style="left:1800.00px;top:983.19px;font-size:11px;font-weight:bold;color:#b4b4b4;transform:scaleX(0.8616);">Schedule Work Order</div>
<div class="a" style="left:0px;top:1014px;width:1912px;height:23px;background:#43acd6"></div>
<div class="a" style="left:0px;top:1036px;width:1912px;height:1px;background:#3a3a3a"></div>
<svg class="a" style="left:1px;top:1018px" width="14" height="14" viewBox="0 0 14 14"><path d="M10.6 8.6 A4.9 4.9 0 1 1 8.4 2.8" fill="none" stroke="#a9d9ec" stroke-width="1.6"/><path d="M11.8 1.2 V5.9 H7.3Z" fill="#a9d9ec"/></svg>
<div class="a" style="left:20px;top:1016px;width:1px;height:18px;background:#fff"></div>
<div class="t" style="left:26.17px;top:1019.00px;font-size:13px;color:#ffffff;transform:scaleX(0.9258);-webkit-text-stroke:0.4px #fff;">Last operation time:  641 ms</div>
<div class="t" style="left:1803.80px;top:1019.00px;font-size:13px;color:#ffffff;transform:scaleX(0.8967);-webkit-text-stroke:0.4px #fff;">version 2023.05.15.0</div>
</body></html>
